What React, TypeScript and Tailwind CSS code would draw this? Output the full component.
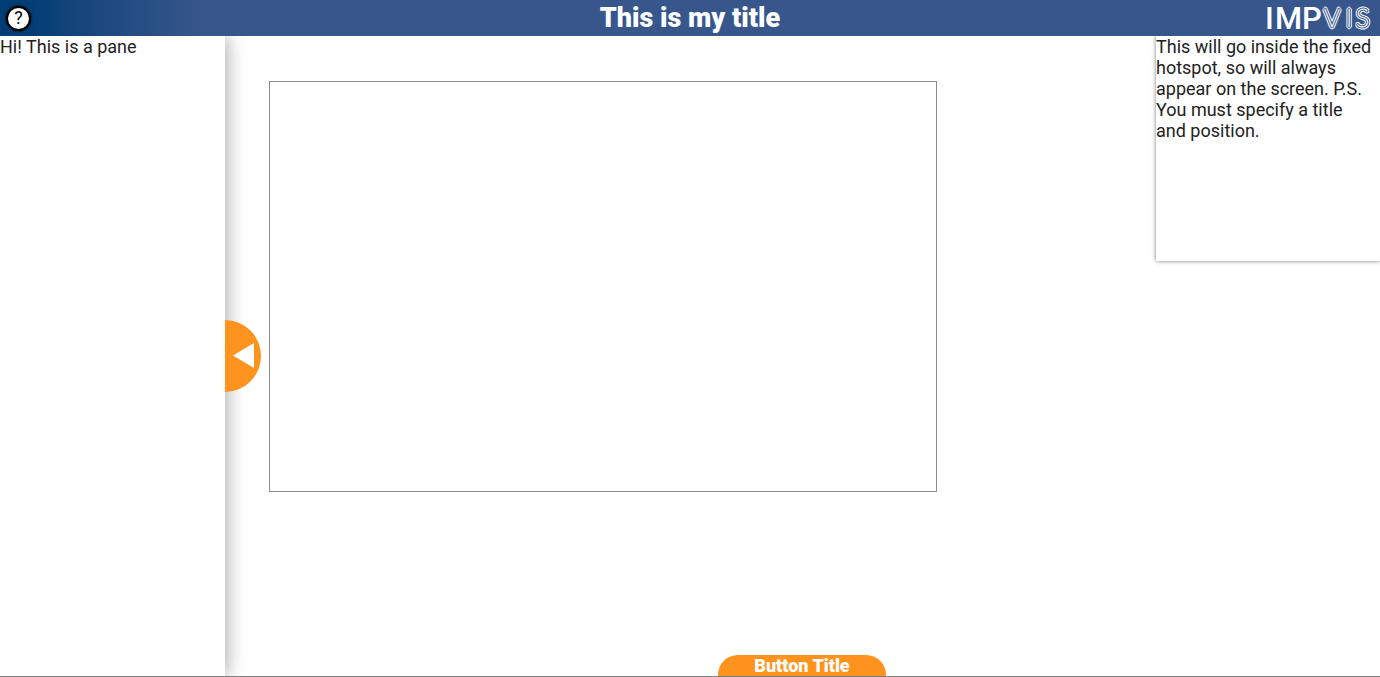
import React from "react";

function Logo() {
  return (
    <svg className="h-9 w-[110px]" viewBox="0 0 110 36" role="img" aria-label="IMPVIS">
      <g fontSize="31" fill="#fff" fontWeight="500" style={{ fontFamily: 'Roboto, sans-serif' }}>
        <text x="1 11 38" y="29">IMP</text>
      </g>
      <g fontSize="25" fontWeight="100" fill="none" strokeLinejoin="bevel" style={{ fontFamily: 'Lato, sans-serif' }}>
        <text x="60 82 92" y="27" stroke="#fff" strokeWidth="5">VIS</text>
        <text x="60 82 92" y="27" stroke="#37578c" strokeWidth="3">VIS</text>
        <text x="60 82 92" y="27" stroke="#fff" strokeWidth="0.8">VIS</text>
      </g>
    </svg>
  );
}

export default function App() {
  return (
    <div className="flex h-screen flex-col overflow-hidden border-b border-[#808080] bg-white font-[Roboto,sans-serif] text-[18px] leading-[21px] text-[#222]">
      <header className="z-10 grid h-9 shrink-0 grid-cols-[1fr_auto_1fr] items-center bg-linear-to-r from-[#003e74] from-2% to-[#37578c] to-15% text-white">
        <button aria-label="Help" className="ml-1.5 flex size-[25px] items-center justify-center rounded-full border-2 border-black bg-white text-lg leading-none text-black shadow-[0_0_3px_#000]">?</button>
        <h1 className="text-[27px] leading-9 font-black">This is my title</h1>
        <div className="mr-1.5 justify-self-end"><Logo /></div>
      </header>
      <div className="flex min-h-0 flex-1">
        <aside className="w-[225px] shrink-0 shadow-[0_0_20px_rgba(0,0,0,0.4)]">
          <p>Hi! This is a pane</p>
        </aside>
        <button aria-label="Collapse pane" className="z-10 flex h-[72px] w-9 shrink-0 items-center self-center rounded-r-full bg-[#ff931e] pl-2">
          <svg className="h-[26px] w-[21px]" viewBox="0 0 21 26" aria-hidden="true">
            <path d="M0 12.5 21 0V25Z" fill="#fff" />
          </svg>
        </button>
        <main className="flex min-w-0 flex-1 flex-col justify-between pt-[45px] pl-2">
          <section className="h-[411px] w-[668px] max-w-full border border-[#8c8c8c]" />
          <button className="ml-[449px] h-[21px] w-[168px] rounded-t-[20px] bg-[#ff931e] font-black text-white">Button Title</button>
        </main>
        <aside className="h-[225px] w-[224px] shrink-0 pr-1 shadow-[0_0_4px_rgba(0,0,0,0.55)]">
          <p>This will go inside the fixed hotspot, so will always appear on the screen. P.S. You must specify a title and position.</p>
        </aside>
      </div>
    </div>
  );
}
